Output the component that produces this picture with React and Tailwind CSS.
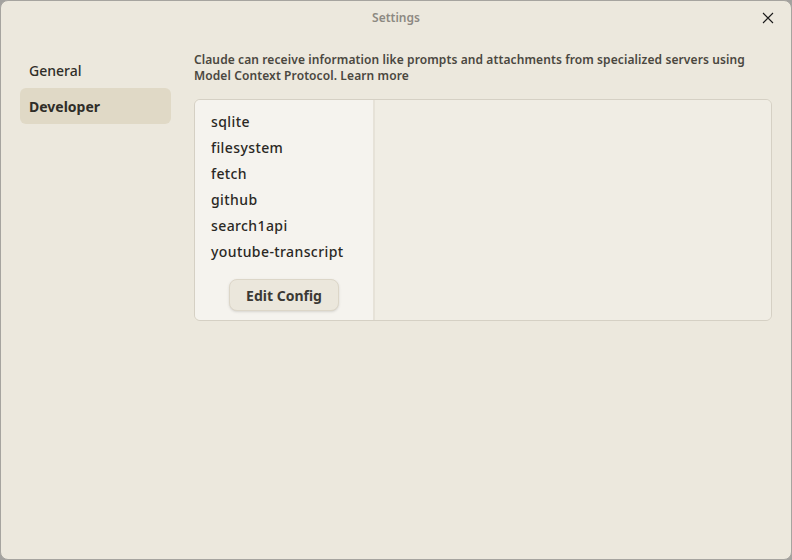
import React from 'react';

const servers = ['sqlite', 'filesystem', 'fetch', 'github', 'search1api', 'youtube-transcript'];

const font = { fontFamily: '"Noto Sans", "Liberation Sans", sans-serif' };

export default function App() {
  return (
    <div className="w-[792px] h-[560px] bg-[#a3a29f]" style={font}>
      <div className="w-full h-full bg-[#ece8dd] border border-[#a6a49f] rounded-[8px] flex flex-col text-[#2f2d28]">
        {/* title bar */}
        <div className="relative h-[34px] flex items-center justify-center">
          <span className="text-[12px] font-semibold text-[#8c8982]">Settings</span>
          <button className="absolute right-[16px] top-[10px] w-[14px] h-[14px] flex items-center justify-center">
            <svg width="12" height="12" viewBox="0 0 12 12" fill="none" stroke="#1a1a1a" strokeWidth="1.1">
              <path d="M1 1L11 11M11 1L1 11" />
            </svg>
          </button>
        </div>

        <div className="flex flex-1 pt-[17px]">
          {/* sidebar */}
          <div className="w-[193px] pl-[19px] pr-[23px] flex flex-col">
            <div className="h-[36px] flex items-center px-[9px] text-[14px] font-medium">General</div>
            <div className="h-[36px] flex items-center px-[9px] text-[14px] font-bold bg-[#e0d9c6] rounded-[6px]">Developer</div>
          </div>

          {/* content */}
          <div className="flex-1 pr-[19px]">
            <p className="text-[12px] leading-[16px] font-semibold text-[#4a4740] pr-[20px] tracking-[0.1px]">
              Claude can receive information like prompts and attachments from specialized servers using Model Context Protocol. Learn more
            </p>
            <div className="mt-[15px] h-[222px] flex border border-[#d5d0c4] rounded-[6px] overflow-hidden">
              <div className="w-[180px] bg-[#f5f3ee] border-r-2 border-[#e6e2d8] flex flex-col pl-[16px] pt-[8px]">
                {servers.map((s) => (
                  <div key={s} className="h-[26px] flex items-center text-[14px] font-medium text-[#2a2824] tracking-[0.4px]">{s}</div>
                ))}
                <div className="mt-[15px] flex justify-center pr-[16px]">
                  <button className="h-[32px] px-[16px] bg-[#ebe7dc] border border-[#dcd6c8] rounded-[8px] text-[14px] font-bold text-[#3b3934] shadow-sm">
                    Edit Config
                  </button>
                </div>
              </div>
              <div className="flex-1 bg-[#f0ede4]" />
            </div>
          </div>
        </div>
      </div>
    </div>
  );
}
